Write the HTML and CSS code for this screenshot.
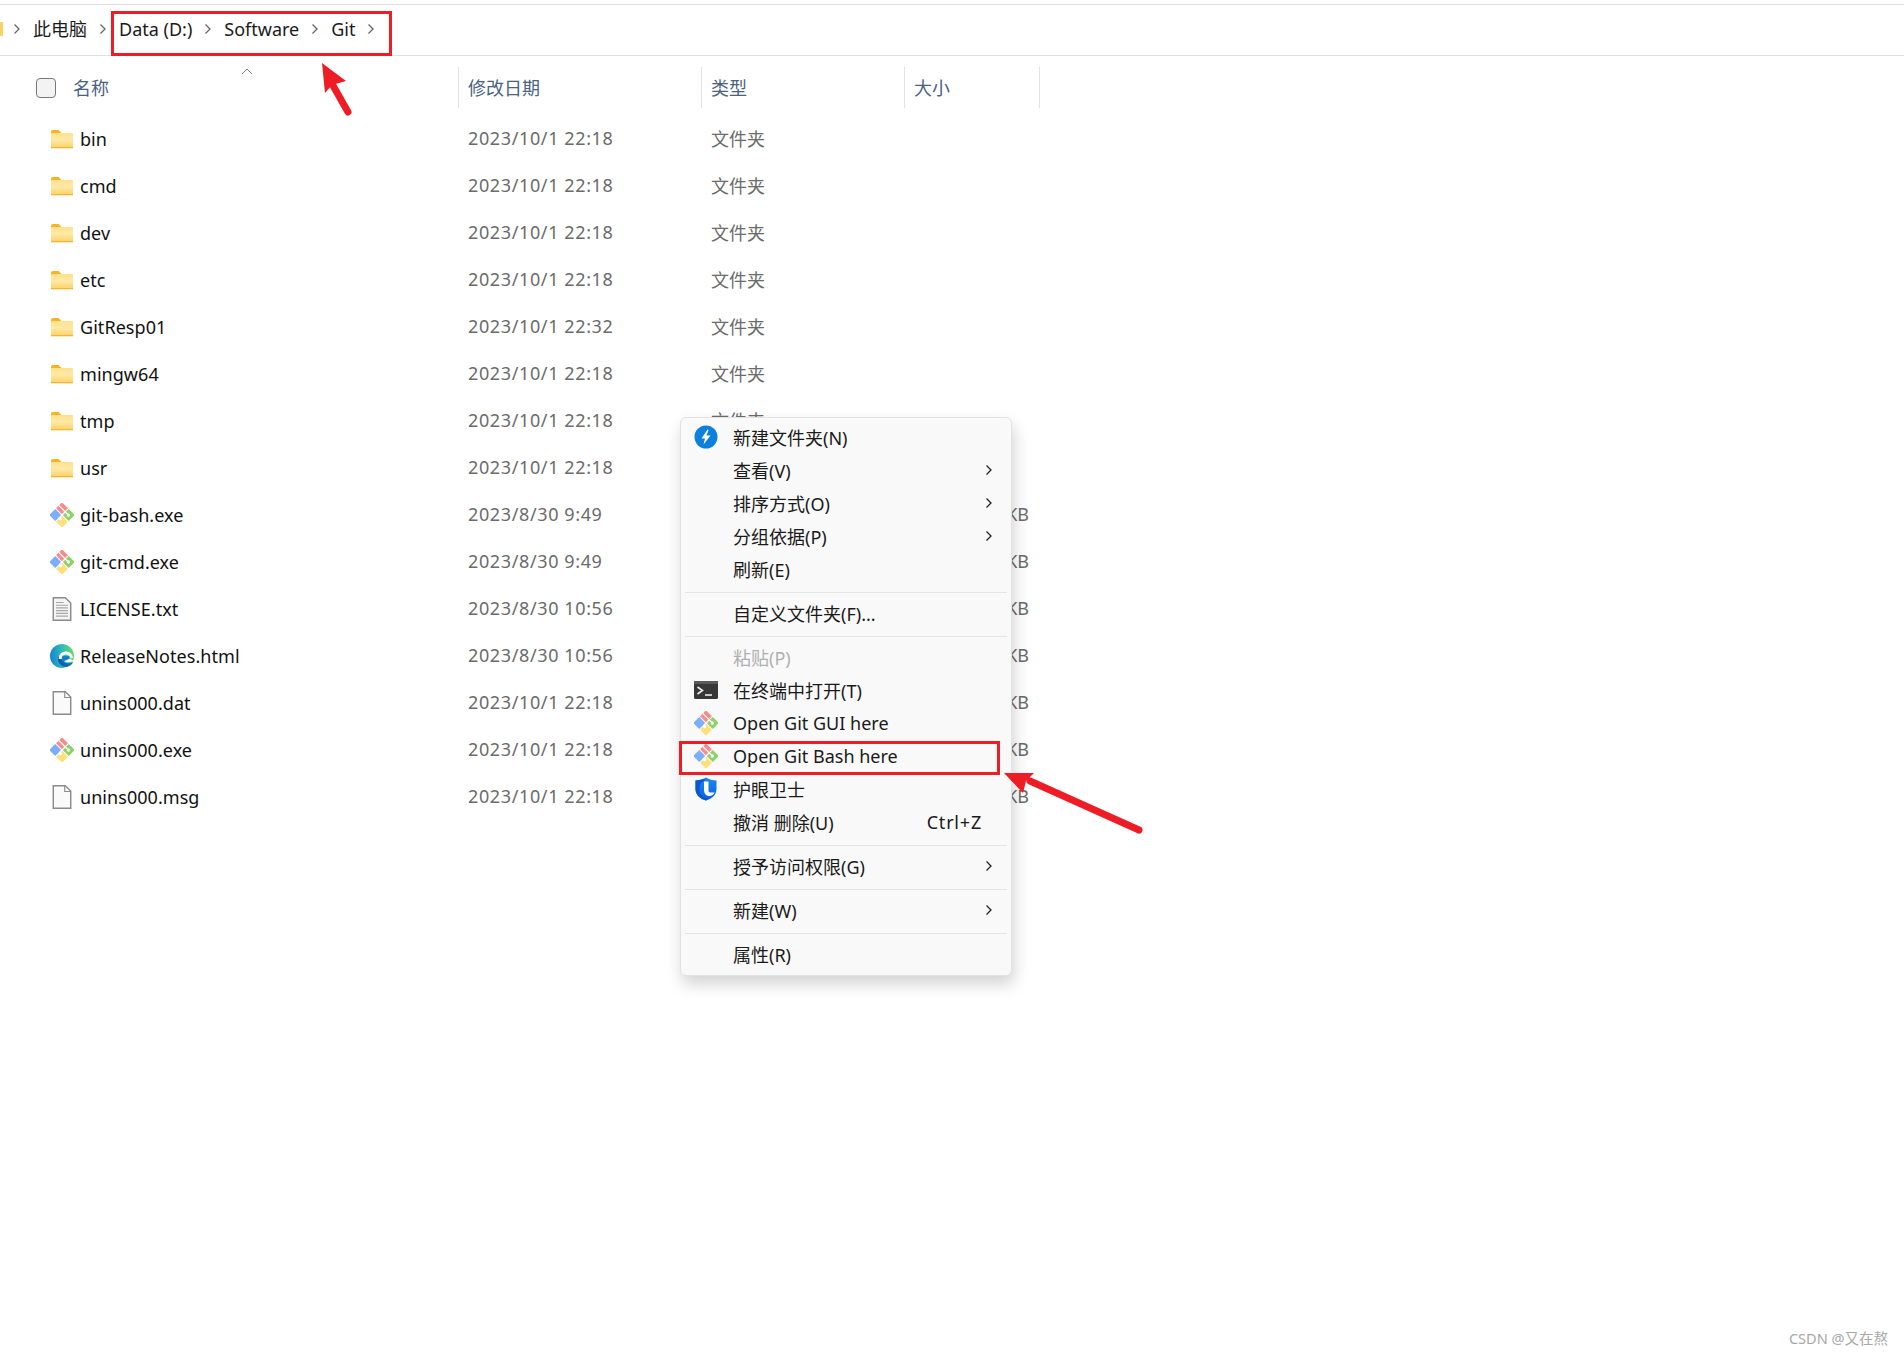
FILE: index.html
```html
<!DOCTYPE html>
<html lang="zh-CN">
<head>
<meta charset="utf-8">
<title>Git</title>
<link rel="stylesheet" href="styles.css">
</head>
<body>
<svg class="defs" width="0" height="0" aria-hidden="true">
  <defs>
    <linearGradient id="fold-body" x1="0" y1="0" x2="0" y2="1"><stop offset="0" stop-color="#ffe18a"/><stop offset=".45" stop-color="#ffe9a8"/><stop offset="1" stop-color="#fcd263"/></linearGradient>
    <linearGradient id="edge-a" x1="0" y1=".5" x2="1" y2=".4"><stop offset="0" stop-color="#1383d6"/><stop offset=".55" stop-color="#2fc0b6"/><stop offset="1" stop-color="#6fdc62"/></linearGradient>
    <linearGradient id="edge-b" x1="0" y1="0" x2="1" y2="0"><stop offset="0" stop-color="#0c5aa6"/><stop offset="1" stop-color="#1a6fc0"/></linearGradient>
    <linearGradient id="shield" x1="0" y1="0" x2="0" y2="1"><stop offset="0" stop-color="#1a8af0"/><stop offset="1" stop-color="#0b5fe0"/></linearGradient>
    <symbol id="i-folder" viewBox="0 0 24 20">
      <path d="M1 3Q1 1 3 1H8.500L11.500 4V6H1Z" fill="#f6b420"/>
      <rect x="1" y="4" width="22" height="15" rx=".8" fill="url(#fold-body)"/>
      <rect x="1" y="18" width="22" height="1.300" fill="#f2b53a"/>
    </symbol>
    <symbol id="i-git" viewBox="0 0 24 24">
      <g transform="rotate(45 12 12)">
        <rect x="3" y="3" width="8.500" height="8.500" rx=".8" fill="#f98b8b"/>
        <rect x="12.500" y="3" width="8.500" height="8.500" rx=".8" fill="#8ed168"/>
        <rect x="12.500" y="12.500" width="8.500" height="8.500" rx=".8" fill="#fddf7c"/>
        <rect x="3" y="12.500" width="8.500" height="8.500" rx=".8" fill="#7daefc"/>
        <path d="M3 7.500H16.500M12 7.500V16" fill="none" stroke="#fff" stroke-width="1.200"/>
        <circle cx="16.500" cy="7.500" r="1.600" fill="#fff"/>
        <circle cx="13.500" cy="15.500" r="1.600" fill="#fff"/>
      </g>
    </symbol>
    <symbol id="i-doc" viewBox="0 0 18 22">
      <path d="M1 .75H12L17 5.500V21.250H1Z" fill="#fafafa" stroke="#8a8a8a" stroke-width="1.300"/>
      <path d="M11.500 1V6H17" fill="none" stroke="#8a8a8a" stroke-width="1"/>
    </symbol>
    <symbol id="i-txt" viewBox="0 0 18 22">
      <path d="M1 .75H12L17 5.500V21.250H1Z" fill="#f4f4f4" stroke="#8a8a8a" stroke-width="1.300"/>
      <path d="M3.500 5h7M3.500 7.500h11M3.500 10h11M3.500 12.500h11M3.500 15h11M3.500 17.500h11" stroke="#a8a8a8" stroke-width="1"/>
    </symbol>
    <symbol id="i-edge" viewBox="0 0 24 24">
      <circle cx="12" cy="12" r="12" fill="url(#edge-a)"/>
      <path d="M24 15.500V24H13C18 23.500 22 20.500 24 15.500Z" fill="#fff"/>
      <path d="M11 12H20V17.500H13Z" fill="#0f7fc9"/>
      <path d="M8 13C7 19 12 23.800 17.500 22.800C20 22 22 20.500 23.300 18C19 20 14.500 19.500 12.500 16.500C11.500 15 11.500 13.500 12 12Z" fill="url(#edge-b)"/>
      <path d="M10.200 15C10 11 13 8.800 16 9C19 9.200 21 11 21.500 14" fill="none" stroke="#fff" stroke-width="3"/>
      <path d="M14 17.200C16.500 18.500 20 18.500 23.500 17L20 14.500Z" fill="#fff"/>
    </symbol>
    <symbol id="i-chev" viewBox="0 0 8 12">
      <path d="M1.500 1.500L6 6L1.500 10.500" fill="none" stroke="currentColor" stroke-width="1.300"/>
    </symbol>
  </defs>
</svg>

<div class="page">
  <nav class="crumbs">
    <span class="sliver"></span>
    <svg class="bc-chev"><use href="#i-chev"/></svg>
    <span class="bc">此电脑</span>
    <svg class="bc-chev"><use href="#i-chev"/></svg>
    <span class="bc">Data (D:)</span>
    <svg class="bc-chev"><use href="#i-chev"/></svg>
    <span class="bc">Software</span>
    <svg class="bc-chev"><use href="#i-chev"/></svg>
    <span class="bc">Git</span>
    <svg class="bc-chev"><use href="#i-chev"/></svg>
  </nav>

  <header class="head">
    <div class="hcell hname"><span class="check"></span><span class="htext">名称</span></div>
    <div class="hcell sep"><span class="htext">修改日期</span></div>
    <div class="hcell sep"><span class="htext">类型</span></div>
    <div class="hcell sep end"><span class="htext">大小</span></div>
    <svg class="sort" viewBox="0 0 12 7"><path d="M1 6L6 1L11 6" fill="none" stroke="#777" stroke-width="1"/></svg>
  </header>

  <main class="list">
    <div class="row"><div class="name"><svg class="ficon folder"><use href="#i-folder"/></svg>bin</div><div class="date">2023/10/1 22:18</div><div class="type">文件夹</div><div class="size"></div></div>
    <div class="row"><div class="name"><svg class="ficon folder"><use href="#i-folder"/></svg>cmd</div><div class="date">2023/10/1 22:18</div><div class="type">文件夹</div><div class="size"></div></div>
    <div class="row"><div class="name"><svg class="ficon folder"><use href="#i-folder"/></svg>dev</div><div class="date">2023/10/1 22:18</div><div class="type">文件夹</div><div class="size"></div></div>
    <div class="row"><div class="name"><svg class="ficon folder"><use href="#i-folder"/></svg>etc</div><div class="date">2023/10/1 22:18</div><div class="type">文件夹</div><div class="size"></div></div>
    <div class="row"><div class="name"><svg class="ficon folder"><use href="#i-folder"/></svg>GitResp01</div><div class="date">2023/10/1 22:32</div><div class="type">文件夹</div><div class="size"></div></div>
    <div class="row"><div class="name"><svg class="ficon folder"><use href="#i-folder"/></svg>mingw64</div><div class="date">2023/10/1 22:18</div><div class="type">文件夹</div><div class="size"></div></div>
    <div class="row"><div class="name"><svg class="ficon folder"><use href="#i-folder"/></svg>tmp</div><div class="date">2023/10/1 22:18</div><div class="type">文件夹</div><div class="size"></div></div>
    <div class="row"><div class="name"><svg class="ficon folder"><use href="#i-folder"/></svg>usr</div><div class="date">2023/10/1 22:18</div><div class="type"></div><div class="size"></div></div>
    <div class="row"><div class="name"><svg class="ficon"><use href="#i-git"/></svg>git-bash.exe</div><div class="date">2023/8/30 9:49</div><div class="type"></div><div class="size">KB</div></div>
    <div class="row"><div class="name"><svg class="ficon"><use href="#i-git"/></svg>git-cmd.exe</div><div class="date">2023/8/30 9:49</div><div class="type"></div><div class="size">KB</div></div>
    <div class="row"><div class="name"><svg class="ficon txt"><use href="#i-txt"/></svg>LICENSE.txt</div><div class="date">2023/8/30 10:56</div><div class="type"></div><div class="size">KB</div></div>
    <div class="row"><div class="name"><svg class="ficon"><use href="#i-edge"/></svg>ReleaseNotes.html</div><div class="date">2023/8/30 10:56</div><div class="type"></div><div class="size">KB</div></div>
    <div class="row"><div class="name"><svg class="ficon txt"><use href="#i-doc"/></svg>unins000.dat</div><div class="date">2023/10/1 22:18</div><div class="type"></div><div class="size">KB</div></div>
    <div class="row"><div class="name"><svg class="ficon"><use href="#i-git"/></svg>unins000.exe</div><div class="date">2023/10/1 22:18</div><div class="type"></div><div class="size">KB</div></div>
    <div class="row"><div class="name"><svg class="ficon txt"><use href="#i-doc"/></svg>unins000.msg</div><div class="date">2023/10/1 22:18</div><div class="type"></div><div class="size">KB</div></div>
  </main>

  <div class="menu">
    <div class="mi"><span class="mslot"><svg class="micon" viewBox="0 0 24 24"><circle cx="12" cy="12" r="11.500" fill="#0d7fdc"/><path d="M13.500 4.500L7.500 13.500H11L9.500 19.500L16.500 10.500H12.500L14.500 5Z" fill="#fff"/></svg></span><span class="mtext">新建文件夹(N)</span></div>
    <div class="mi"><span class="mslot"></span><span class="mtext">查看(V)</span><svg class="mchev"><use href="#i-chev"/></svg></div>
    <div class="mi"><span class="mslot"></span><span class="mtext">排序方式(O)</span><svg class="mchev"><use href="#i-chev"/></svg></div>
    <div class="mi"><span class="mslot"></span><span class="mtext">分组依据(P)</span><svg class="mchev"><use href="#i-chev"/></svg></div>
    <div class="mi"><span class="mslot"></span><span class="mtext">刷新(E)</span></div>
    <div class="msep"></div>
    <div class="mi"><span class="mslot"></span><span class="mtext">自定义文件夹(F)...</span></div>
    <div class="msep"></div>
    <div class="mi disabled"><span class="mslot"></span><span class="mtext">粘贴(P)</span></div>
    <div class="mi"><span class="mslot"><svg class="micon term" viewBox="0 0 24 18"><rect width="24" height="18" rx="1.500" fill="#383838"/><rect width="24" height="3" fill="#5a5a5a"/><path d="M3.500 6L8.500 9.500L3.500 13" fill="none" stroke="#eee" stroke-width="1.600"/><path d="M11 14H18" stroke="#eee" stroke-width="1.600"/></svg></span><span class="mtext">在终端中打开(T)</span></div>
    <div class="mi"><span class="mslot"><svg class="micon"><use href="#i-git"/></svg></span><span class="mtext">Open Git GUI here</span></div>
    <div class="mi"><span class="mslot"><svg class="micon"><use href="#i-git"/></svg></span><span class="mtext">Open Git Bash here</span></div>
    <div class="mi"><span class="mslot"><svg class="micon" viewBox="0 0 24 24"><path d="M12 .5C15 2.500 19 3.500 22.500 3.500V12C22.500 18 17.500 22 12 23.500C6.500 22 1.500 18 1.500 12V3.500C5 3.500 9 2.500 12 .5Z" fill="url(#shield)"/><path d="M10.500 3.500C5 6 5 12 6 16C7 19 10 21 14 21.500L12 23.500C6.500 22 1.500 18 1.500 12V3.500C5 3.500 8 2.500 10.500 1.800Z" fill="#0b57d0"/><path d="M10 4.500H14.500V13.500C14.500 15 15.500 15.500 17 15.500H20.500C19.500 18 17 19.500 14.500 19C11.500 18.500 10 16 10 13Z" fill="#fff"/></svg></span><span class="mtext">护眼卫士</span></div>
    <div class="mi"><span class="mslot"></span><span class="mtext">撤消 删除(U)</span><span class="mkey">Ctrl+Z</span></div>
    <div class="msep"></div>
    <div class="mi"><span class="mslot"></span><span class="mtext">授予访问权限(G)</span><svg class="mchev"><use href="#i-chev"/></svg></div>
    <div class="msep"></div>
    <div class="mi"><span class="mslot"></span><span class="mtext">新建(W)</span><svg class="mchev"><use href="#i-chev"/></svg></div>
    <div class="msep"></div>
    <div class="mi"><span class="mslot"></span><span class="mtext">属性(R)</span></div>
  </div>

  <div class="redbox box-crumbs"></div>
  <div class="redbox box-bash"></div>
  <svg class="annot" viewBox="0 0 1904 1355" aria-hidden="true">
    <path d="M348 112L331 82" stroke="#ee1c25" stroke-width="7" stroke-linecap="round" fill="none"/>
    <path d="M322 63L346 81L332 85L325 93Z" fill="#ee1c25"/>
    <path d="M1139 830L1030 781" stroke="#ee1c25" stroke-width="7" stroke-linecap="round" fill="none"/>
    <path d="M1004 773L1034 773L1026 781L1023 793Z" fill="#ee1c25"/>
  </svg>

  <div class="mark">CSDN @又在熬</div>
</div>
</body>
</html>
```

FILE: styles.css
```css
* { box-sizing: border-box; }
html, body { margin: 0; padding: 0; background: #fff; }
body {
  font-family: "Noto Sans", "Noto Sans CJK SC", sans-serif;
  font-size: 18px;
  color: #1a1a1a;
  overflow: hidden;
}
.defs { position: absolute; }
.page { position: relative; width: 1904px; height: 1355px; padding-top: 4px; overflow: hidden; }

/* breadcrumb */
.crumbs {
  display: flex;
  align-items: center;
  height: 52px;
  border-top: 1px solid #e0e0e0;
  border-bottom: 1px solid #e0e0e0;
  padding-bottom: 3px;
}
.sliver { width: 3px; height: 14px; background: #fbd25e; margin-right: 10px; }
.bc { white-space: nowrap; line-height: 26px; }
.bc-chev { width: 8px; height: 12px; color: #666; margin-right: 12px; flex: none; }
.bc + .bc-chev { margin-left: 12px; }

/* column header */
.head {
  position: relative;
  display: grid;
  grid-template-columns: 422px 243px 203px 136px;
  width: 1004px;
  margin-left: 36px;
  margin-top: 11px;
  height: 41px;
  color: #4a6280;
}
.hcell { display: flex; align-items: center; }
.htext { margin-top: -2px; }
.hname { gap: 17px; }
.sep { border-left: 1px solid #e3e3e3; padding-left: 9px; }
.end { border-right: 1px solid #e3e3e3; }
.check {
  width: 20px; height: 20px;
  border: 1px solid #777;
  border-radius: 4px;
  background: #f3f3f3;
}
.sort { position: absolute; left: 205px; top: 1px; width: 12px; height: 7px; }

/* file rows */
.list { margin-top: 7px; padding-left: 50px; }
.row {
  display: grid;
  grid-template-columns: 408px 253px 193px 125px;
  height: 47px;
  align-items: center;
  white-space: nowrap;
}
.name { display: flex; align-items: center; gap: 6px; color: #111; letter-spacing: .05px; }
.ficon { width: 24px; height: 24px; flex: none; }
.ficon.folder { height: 20px; }
.date, .type, .size { color: #6b6b6b; padding-bottom: 1px; }
.date { padding-left: 10px; letter-spacing: .62px; }
.size { text-align: right; }

/* context menu */
.menu {
  position: absolute;
  left: 680px;
  top: 417px;
  width: 332px;
  height: 559px;
  background: #f9f9f9;
  border: 1px solid #e2e2e2;
  border-radius: 6px;
  padding: 4px 0;
  box-shadow: 2px 8px 16px rgba(0, 0, 0, .18);
  color: #1a1a1a;
}
.mi { display: flex; align-items: center; height: 33px; padding: 0 16px 3px 0; white-space: nowrap; }
.mslot { width: 52px; flex: none; display: flex; justify-content: center; padding-right: 2px; }
.mtext { flex: 1; }
.micon { width: 24px; height: 24px; display: block; }
.micon.term { height: 18px; }
.mchev { width: 8px; height: 12px; color: #222; margin-right: 2px; }
.mkey { margin-right: 13px; letter-spacing: .8px; }
.disabled { color: #b0b0b0; }
.msep { height: 1px; margin: 5px 4px; background: #e4e4e4; }

/* annotations */
.redbox { position: absolute; border: 3px solid #ee1c25; }
.box-crumbs { left: 111px; top: 11px; width: 281px; height: 45px; }
.box-bash { left: 679px; top: 741px; width: 321px; height: 34px; }
.annot { position: absolute; left: 0; top: 0; width: 1904px; height: 1355px; pointer-events: none; }

.mark { position: absolute; right: 16px; top: 1327px; font-size: 14.500px; color: #a8a8a8; }
```
